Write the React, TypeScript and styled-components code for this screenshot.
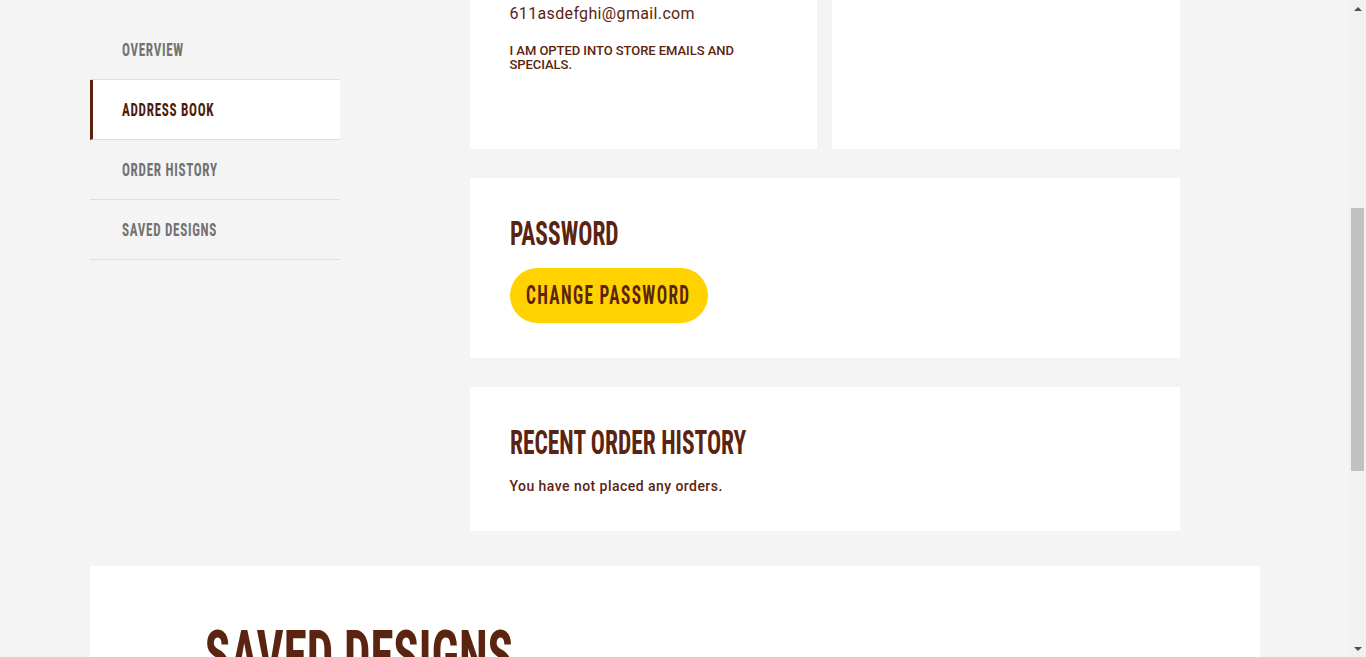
import React from "react";
import styled, { createGlobalStyle, css } from "styled-components";

const BROWN = "#5b2410";
const DARK = "#4a1b0c";
const HEAD = `"Roboto Condensed", "DejaVu Sans Condensed", "Liberation Sans Narrow", Roboto, "Liberation Sans", sans-serif`;
const BODY = `Roboto, "Noto Sans", "Liberation Sans", sans-serif`;
const SQUEEZE = 0.69;

const squeezed = css`
  display: block;
  white-space: nowrap;
  transform: scaleX(${SQUEEZE});
  transform-origin: left center;
`;

const GlobalStyle = createGlobalStyle`
  html { scrollbar-width: none; }
  html::-webkit-scrollbar { display: none; }
  * { box-sizing: border-box; }
  body {
    margin: 0;
    background: #f4f4f4;
    font-family: ${BODY};
    color: ${BROWN};
  }
`;

const Page = styled.div`
  padding-right: 17px;
`;

const Container = styled.div`
  max-width: 1170px;
  margin: 0 auto;
`;

/* ---------- account layout ---------- */
const Layout = styled(Container)`
  display: flex;
  align-items: flex-start;
`;

const Sidebar = styled.nav`
  flex: none;
  width: 250px;
  margin-top: 20px;
  display: flex;
  flex-direction: column;
`;

const NavItem = styled.a<{ $active?: boolean }>`
  height: 60px;
  display: flex;
  align-items: center;
  padding-left: 32px;
  padding-bottom: 1px;
  border-bottom: 1px solid #dedede;
  font-family: ${HEAD};
  font-weight: 700;
  font-size: 19px;
  letter-spacing: 1px;
  text-transform: uppercase;
  color: #727272;
  text-decoration: none;
  cursor: pointer;
  ${(p) =>
    p.$active &&
    css`
      background: #fff;
      border-left: 3px solid ${BROWN};
      padding-left: 29px;
      color: ${DARK};
    `}
`;

const NavLabel = styled.span`
  ${squeezed};
`;

const Main = styled.main`
  flex: none;
  width: 710px;
  margin-left: 130px;
  display: flex;
  flex-direction: column;
  gap: 29px;
`;

const CardRow = styled.div`
  display: grid;
  grid-template-columns: 347px 348px;
  gap: 15px;
`;

const Card = styled.section`
  background: #fff;
  padding: 35px 40px;
`;

const ProfileCard = styled(Card)`
  padding: 3px 40px 77px;
`;

const CardTitle = styled.h2`
  margin: 0 0 15px;
  font-family: ${HEAD};
  font-weight: 700;
  font-size: 34px;
  line-height: 40px;
  text-transform: uppercase;
  color: ${BROWN};
  ${squeezed};
`;

const EmailValue = styled.p`
  margin: 0;
  font-size: 16px;
  line-height: 22px;
  letter-spacing: 0.35px;
  color: ${BROWN};
`;

const OptIn = styled.p`
  margin: 19px 0 0;
  max-width: 265px;
  font-size: 13px;
  line-height: 14px;
  font-weight: 500;
  letter-spacing: -0.05px;
  text-transform: uppercase;
  color: ${BROWN};
`;

const PillButton = styled.button`
  width: 198px;
  height: 55px;
  border: none;
  border-radius: 28px;
  background: #ffd200;
  display: flex;
  align-items: center;
  justify-content: center;
  padding: 0;
  cursor: pointer;
  font-family: ${HEAD};
  font-weight: 700;
  font-size: 25px;
  letter-spacing: 2px;
  text-transform: uppercase;
  color: ${BROWN};
`;

const PillLabel = styled.span`
  display: inline-block;
  white-space: nowrap;
  transform: scaleX(${SQUEEZE});
  transform-origin: center;
`;

const BodyText = styled.p`
  margin: 0;
  font-size: 14px;
  line-height: 19px;
  font-weight: 500;
  letter-spacing: 0.45px;
  color: ${BROWN};
`;

/* ---------- saved designs ---------- */
const SavedSection = styled(Container)`
  margin-top: 35px;
  background: #fff;
  padding: 55px 115px 120px;
`;

const SavedTitle = styled.h2`
  margin: 0;
  font-family: ${HEAD};
  font-weight: 700;
  font-size: 68px;
  line-height: 70px;
  color: ${BROWN};
  ${squeezed};
`;

/* ---------- window scrollbar (drawn) ---------- */
const Rail = styled.div`
  position: fixed;
  top: 0;
  right: 0;
  width: 17px;
  height: 100vh;
  background: #f1f1f1;
  display: flex;
  flex-direction: column;
`;

const RailButton = styled.div<{ $dir: "up" | "down" }>`
  flex: none;
  height: 17px;
  display: flex;
  align-items: center;
  justify-content: center;
  &::before {
    content: "";
    width: 0;
    height: 0;
    border-left: 4px solid transparent;
    border-right: 4px solid transparent;
    ${(p) =>
      p.$dir === "up"
        ? css`border-bottom: 4px solid #505050;`
        : css`border-top: 4px solid #505050;`}
  }
`;

const RailTrack = styled.div`
  flex: 1;
  padding: 191px 2px 0;
`;

const RailThumb = styled.div`
  height: 263px;
  background: #c1c1c1;
`;

const navItems = ["Overview", "Address Book", "Order History", "Saved Designs"];

export default function App() {
  return (
    <Page>
      <GlobalStyle />
      <Layout>
        <Sidebar>
          {navItems.map((label) => (
            <NavItem key={label} $active={label === "Address Book"}>
              <NavLabel>{label}</NavLabel>
            </NavItem>
          ))}
        </Sidebar>

        <Main>
          <CardRow>
            <ProfileCard>
              <EmailValue>611asdefghi@gmail.com</EmailValue>
              <OptIn>I am opted into store emails and specials.</OptIn>
            </ProfileCard>
            <ProfileCard />
          </CardRow>

          <Card>
            <CardTitle>Password</CardTitle>
            <PillButton type="button">
              <PillLabel>Change Password</PillLabel>
            </PillButton>
          </Card>

          <Card>
            <CardTitle>Recent Order History</CardTitle>
            <BodyText>You have not placed any orders.</BodyText>
          </Card>
        </Main>
      </Layout>

      <SavedSection>
        <SavedTitle>SAVED DESIGNS</SavedTitle>
      </SavedSection>

      <Rail aria-hidden="true">
        <RailButton $dir="up" />
        <RailTrack>
          <RailThumb />
        </RailTrack>
        <RailButton $dir="down" />
      </Rail>
    </Page>
  );
}
